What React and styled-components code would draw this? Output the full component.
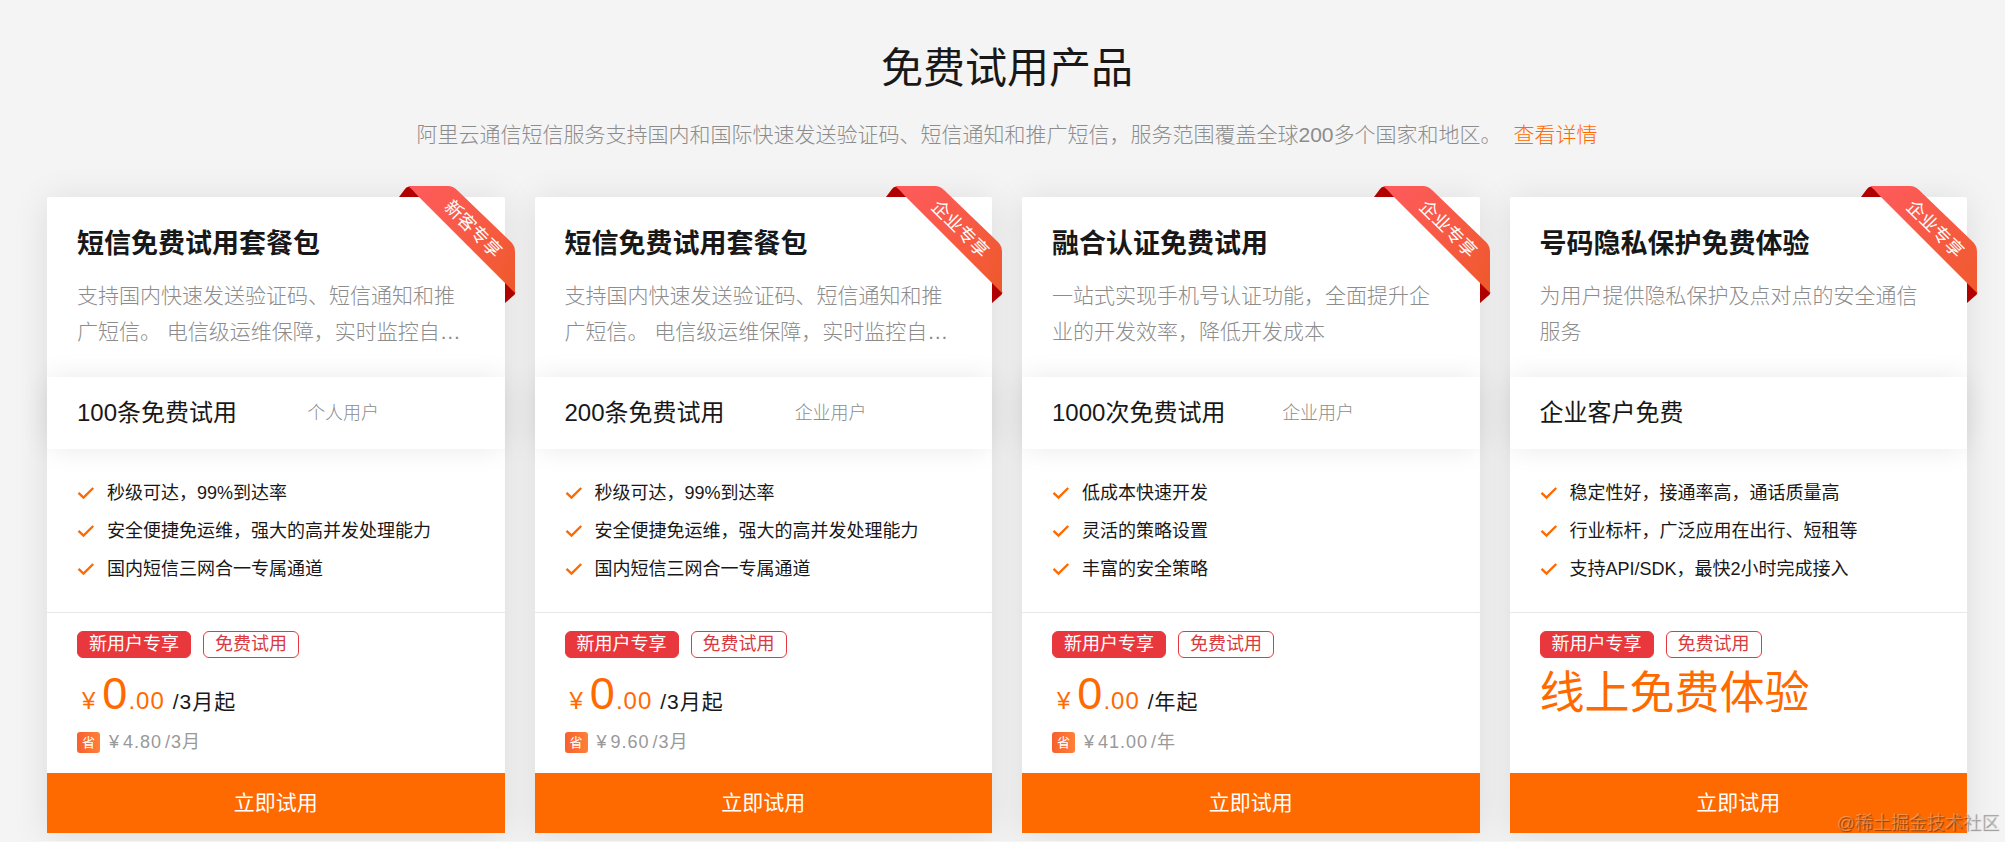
import React from "react";
import styled, { createGlobalStyle } from "styled-components";

const cards = [
  {
    id: 1,
    ribbon: "新客专享",
    title: "短信免费试用套餐包",
    desc: "支持国内快速发送验证码、短信通知和推广短信。 电信级运维保障，实时监控自…",
    quota: "100条免费试用",
    audience: "个人用户",
    features: [
      "秒级可达，99%到达率",
      "安全便捷免运维，强大的高并发处理能力",
      "国内短信三网合一专属通道",
    ],
    unit: "/3月起",
    saved: "4.80",
    savedUnit: "/3月",
  },
  {
    id: 2,
    ribbon: "企业专享",
    title: "短信免费试用套餐包",
    desc: "支持国内快速发送验证码、短信通知和推广短信。 电信级运维保障，实时监控自…",
    quota: "200条免费试用",
    audience: "企业用户",
    features: [
      "秒级可达，99%到达率",
      "安全便捷免运维，强大的高并发处理能力",
      "国内短信三网合一专属通道",
    ],
    unit: "/3月起",
    saved: "9.60",
    savedUnit: "/3月",
  },
  {
    id: 3,
    ribbon: "企业专享",
    title: "融合认证免费试用",
    desc: "一站式实现手机号认证功能，全面提升企业的开发效率，降低开发成本",
    quota: "1000次免费试用",
    audience: "企业用户",
    features: ["低成本快速开发", "灵活的策略设置", "丰富的安全策略"],
    unit: "/年起",
    saved: "41.00",
    savedUnit: "/年",
  },
  {
    id: 4,
    ribbon: "企业专享",
    title: "号码隐私保护免费体验",
    desc: "为用户提供隐私保护及点对点的安全通信服务",
    quota: "企业客户免费",
    features: [
      "稳定性好，接通率高，通话质量高",
      "行业标杆，广泛应用在出行、短租等",
      "支持API/SDK，最快2小时完成接入",
    ],
    slogan: "线上免费体验",
  },
];

const CornerRibbon = ({ id, text }) => (
  <Ribbon>
    <svg width="117" height="117" viewBox="0 0 117 117" aria-hidden="true">
      <defs>
        <linearGradient id={`ribbon-${id}`} x1="0" y1="0" x2="1" y2="1">
          <stop offset="0" stopColor="#ff5a5e" />
          <stop offset="1" stopColor="#f05a2c" />
        </linearGradient>
      </defs>
      <path d="M0 11 L6 3 Q8 0 12 1 L21 11 Z" fill="#b10000" />
      <path d="M106 96 L116 105 Q117 108 114 110 L106 117 Z" fill="#b10000" />
      <path
        d="M9 0 H49 Q54 0 58 4 L112 56 Q116 60 116 66 V107 L18 9 Q13 3 9 0 Z"
        fill={`url(#ribbon-${id})`}
      />
    </svg>
    <RibbonText>{text}</RibbonText>
  </Ribbon>
);

const TrialCard = ({ card }) => (
  <Card>
    <CornerRibbon id={card.id} text={card.ribbon} />
    <CardHead>
      <CardTitle>{card.title}</CardTitle>
      <CardDesc>{card.desc}</CardDesc>
    </CardHead>
    <Stripe>
      <Quota>{card.quota}</Quota>
      {card.audience && <Audience>{card.audience}</Audience>}
    </Stripe>
    <Features>
      {card.features.map((feature) => (
        <Feature key={feature}>
          <svg width="18" height="16" viewBox="0 0 18 16" aria-hidden="true">
            <path
              d="M1.5 6.8 L6.5 11.5 L16.2 2"
              fill="none"
              stroke="#ff6a00"
              strokeWidth="2.4"
            />
          </svg>
          {feature}
        </Feature>
      ))}
    </Features>
    <PriceArea>
      <Tags>
        <Tag $filled>新用户专享</Tag>
        <Tag>免费试用</Tag>
      </Tags>
      {card.slogan ? (
        <Slogan>{card.slogan}</Slogan>
      ) : (
        <>
          <Price>
            <Currency>¥</Currency>
            <Amount>0</Amount>
            <Cents>.00</Cents>
            <Unit>{card.unit}</Unit>
          </Price>
          <Saved>
            <SavedBadge>省</SavedBadge>
            <span>¥</span>
            <SavedAmount>{card.saved}</SavedAmount>
            <span>{card.savedUnit}</span>
          </Saved>
        </>
      )}
    </PriceArea>
    <TryButton type="button">立即试用</TryButton>
  </Card>
);

const App = () => (
  <>
    <GlobalStyle />
    <Section>
      <Heading>免费试用产品</Heading>
      <Intro>
        阿里云通信短信服务支持国内和国际快速发送验证码、短信通知和推广短信，服务范围覆盖全球200多个国家和地区。
        <DetailLink href="#detail">查看详情</DetailLink>
      </Intro>
      <CardGrid>
        {cards.map((card) => (
          <TrialCard key={card.id} card={card} />
        ))}
      </CardGrid>
      <Watermark>@稀土掘金技术社区</Watermark>
    </Section>
  </>
);

export default App;

const GlobalStyle = createGlobalStyle`
  * {
    box-sizing: border-box;
  }

  body {
    margin: 0;
    background: #f4f4f4;
    color: #181818;
    font-family: "Liberation Sans", "Noto Sans CJK SC", sans-serif;
    text-spacing-trim: space-all;
  }
`;

const Section = styled.section`
  position: relative;
  padding: 37px 38px 8px 47px;
  overflow: hidden;
`;

const Heading = styled.h2`
  margin: 0;
  font-size: 42px;
  font-weight: 400;
  line-height: 63px;
  text-align: center;
`;

const Intro = styled.p`
  margin: 18px 0 45px;
  color: #8c8c8c;
  font-size: 21px;
  font-weight: 300;
  line-height: 34px;
  text-align: center;
`;

const DetailLink = styled.a`
  margin-left: 12px;
  color: #ff6a00;
  text-decoration: none;
`;

const CardGrid = styled.div`
  display: grid;
  grid-template-columns: repeat(4, minmax(0, 1fr));
  gap: 30px;
`;

const Card = styled.article`
  position: relative;
  display: flex;
  flex-direction: column;
  background: #fff;
  border-radius: 2px;
  box-shadow: 0 3px 36px rgba(0, 0, 0, 0.1);
`;

const Ribbon = styled.div`
  position: absolute;
  top: -11px;
  right: -11px;
  width: 117px;
  height: 117px;

  svg {
    display: block;
  }
`;

const RibbonText = styled.span`
  position: absolute;
  top: 31px;
  left: 29px;
  width: 90px;
  color: #fff;
  font-size: 18px;
  line-height: 24px;
  text-align: center;
  transform: rotate(45deg);
`;

const CardHead = styled.div`
  height: 180px;
  padding: 29px 30px 0;
`;

const CardTitle = styled.h3`
  margin: 0 0 16px;
  font-size: 27px;
  font-weight: 700;
  line-height: 36px;
`;

const CardDesc = styled.p`
  margin: 0;
  color: #8c8c8c;
  font-size: 21px;
  font-weight: 300;
  line-height: 36px;
`;

const Stripe = styled.div`
  display: grid;
  grid-template-columns: 11fr 8fr;
  align-items: center;
  height: 72px;
  padding: 0 30px;
  background: #fff;
  box-shadow: 0 0 30px -3px rgba(0, 0, 0, 0.11);
`;

const Quota = styled.span`
  font-size: 24px;
  line-height: 36px;
`;

const Audience = styled.span`
  color: #8c8c8c;
  font-size: 18px;
  font-weight: 300;
  line-height: 27px;
`;

const Features = styled.ul`
  display: flex;
  flex-direction: column;
  gap: 11px;
  height: 164px;
  margin: 0;
  padding: 31px 30px 0;
  border-bottom: 1px solid #e8e8e8;
  list-style: none;
`;

const Feature = styled.li`
  display: flex;
  align-items: center;
  gap: 12px;
  font-size: 18px;
  line-height: 27px;
`;

const PriceArea = styled.div`
  height: 160px;
  padding: 18px 30px 0;
`;

const Tags = styled.div`
  display: flex;
  gap: 12px;
  margin-bottom: 3px;
`;

const Tag = styled.span`
  padding: 0 11px;
  border: 1px solid #e8383d;
  border-radius: 6px;
  background: ${({ $filled }) => ($filled ? "#e8383d" : "#fff")};
  color: ${({ $filled }) => ($filled ? "#fff" : "#d93a40")};
  font-size: 18px;
  line-height: 25px;
`;

const Price = styled.div`
  display: flex;
  align-items: baseline;
  height: 66px;
  padding-left: 5px;
  color: #ff6a00;
  letter-spacing: 1px;
  line-height: 66px;
`;

const Currency = styled.span`
  margin-right: 6px;
  font-size: 24px;
`;

const Amount = styled.span`
  font-size: 45px;
`;

const Cents = styled.span`
  margin-right: 8px;
  font-size: 24px;
`;

const Unit = styled.span`
  color: #181818;
  font-size: 21px;
`;

const Saved = styled.div`
  display: flex;
  align-items: center;
  margin-top: 2px;
  color: #999;
  font-size: 18px;
  letter-spacing: 1px;
  line-height: 27px;
`;

const SavedBadge = styled.span`
  width: 23px;
  margin-right: 9px;
  border-radius: 3px;
  background: linear-gradient(90deg, #f7602f, #ff8038);
  color: #fff;
  font-size: 13px;
  letter-spacing: 0;
  line-height: 21px;
  text-align: center;
`;

const SavedAmount = styled.span`
  margin: 0 3px;
`;

const Slogan = styled.p`
  margin: 0;
  color: #ff6a00;
  font-size: 45px;
  line-height: 66px;
`;

const TryButton = styled.button`
  height: 60px;
  padding: 0;
  border: 0;
  background: #ff6a00;
  color: #fff;
  font-family: inherit;
  font-size: 21px;
  line-height: 60px;
  cursor: pointer;
`;

const Watermark = styled.span`
  position: absolute;
  right: 6px;
  bottom: 4px;
  color: rgba(255, 255, 255, 0.3);
  font-size: 18px;
  line-height: 27px;
  text-shadow: 1px 1px 1px rgba(0, 0, 0, 0.4);
`;
